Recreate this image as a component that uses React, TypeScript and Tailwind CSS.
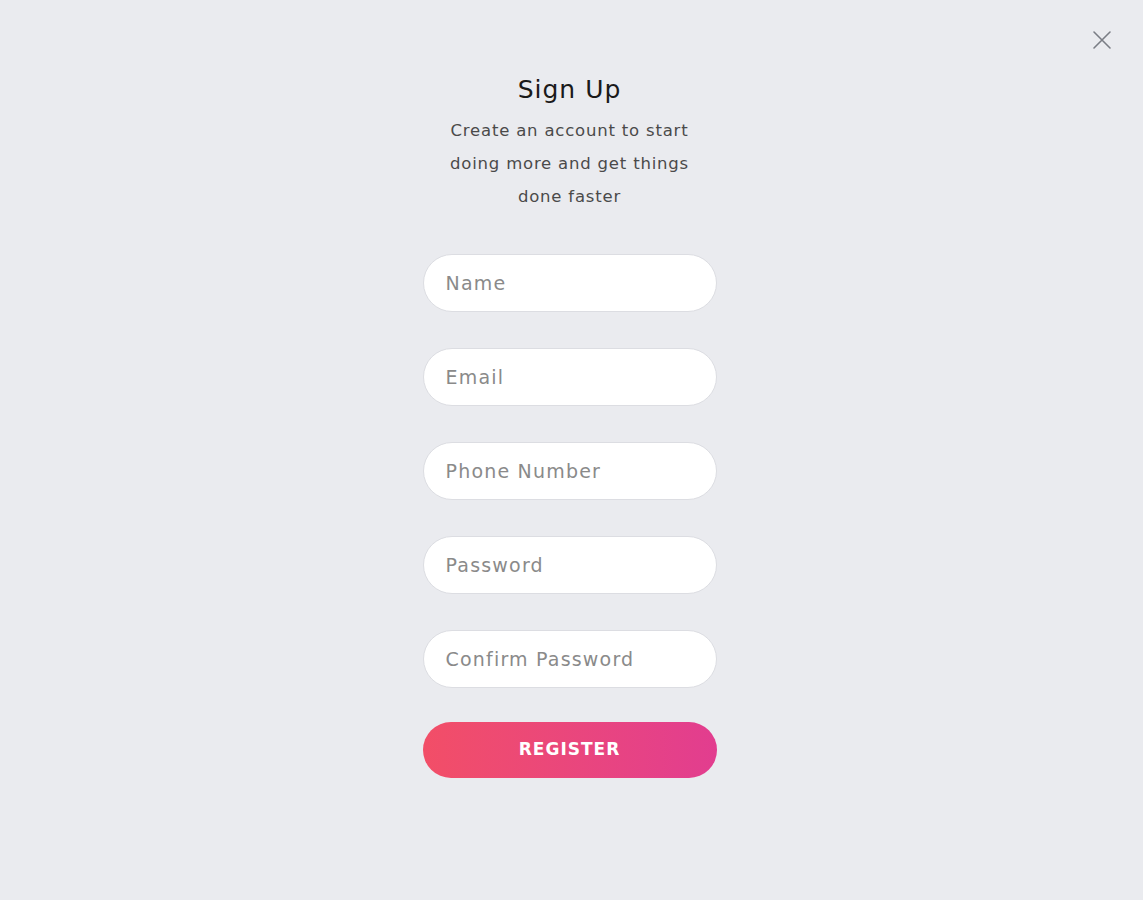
import React from "react";

export default function App() {
  const fields = ["Name", "Email", "Phone Number", "Password", "Confirm Password"];
  return (
    <div
      className="relative w-full h-[900px] bg-[#eaebef] flex flex-col items-center pr-[4px]"
      style={{ fontFamily: "'DejaVu Sans', 'Open Sans', sans-serif" }}
    >
      <button className="absolute top-[30px] right-[31px] w-[20px] h-[20px] text-[#7a7d85]">
        <svg viewBox="0 0 20 20" width="20" height="20" fill="none" stroke="currentColor" strokeWidth="1.6" strokeLinecap="round">
          <path d="M2 2 L18 18 M18 2 L2 18" />
        </svg>
      </button>
      <h1 className="mt-[74px] text-[25px] leading-[32px] font-medium text-[#1a1a1a] tracking-[1px]">Sign Up</h1>
      <p className="mt-[8px] text-center text-[16.5px] leading-[33px] text-[#4a4a4a] tracking-[0.8px]">
        Create an account to start
        <br />
        doing more and get things
        <br />
        done faster
      </p>
      <form className="mt-[41px] w-[294px] flex flex-col gap-[36px]">
        {fields.map((f) => (
          <input
            key={f}
            placeholder={f}
            className="h-[58px] w-full rounded-full bg-white border border-[#dcdde2] px-[22px] text-[19px] tracking-[1.2px] text-[#333] placeholder:text-[#8a8a8a] outline-none"
          />
        ))}
        <button
          type="button"
          className="-mt-[2px] h-[56px] w-full rounded-full bg-gradient-to-r from-[#f24e67] to-[#e23d8f] text-white text-[17px] font-bold tracking-[1px]"
        >
          REGISTER
        </button>
      </form>
    </div>
  );
}
